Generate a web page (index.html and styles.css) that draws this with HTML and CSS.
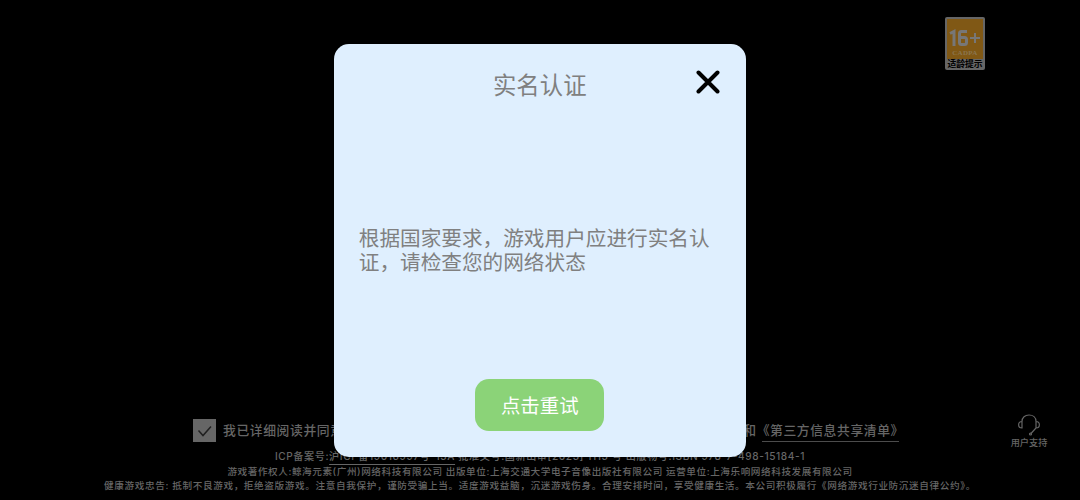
FILE: index.html
```html
<!DOCTYPE html>
<html lang="zh-CN">
<head>
<meta charset="utf-8">
<title>实名认证</title>
<link rel="stylesheet" href="styles.css">
</head>
<body>
<main class="screen">
  <header class="top">
    <div class="rating">
      <div class="rating-face">
        <svg class="rating-age" viewBox="0 0 32 18"><path d="M1 4.500L5 2.500V17M18 2.500H12.500Q10.500 2.500 10.500 4.500V13.500Q10.500 15.500 12.500 15.500H15.500Q17.500 15.500 17.500 13.500V10.500Q17.500 8.500 15.500 8.500H10.500"/><path class="plus" d="M21 9H31M26 4V14"/></svg>
        <span class="rating-org">CADPA</span>
      </div>
      <span class="rating-label">适龄提示</span>
    </div>
  </header>
  <footer class="bottom">
    <div class="row">
      <div class="agree">
        <span class="check"><svg viewBox="0 0 23 23"><path d="M5.500 11.500L10 16.500L18 7.500"/></svg></span>
        <span>我已详细阅读并同意</span>
        <span class="agree-end">和<a class="doc">《第三方信息共享清单》</a></span>
      </div>
      <div class="support">
        <svg viewBox="0 0 24 22"><path d="M5 8V7.500C5 3.500 8 1 12 1S19 3.500 19 7.500V14L14 19.500M5 7.500V14C.5 14 .5 7.500 5 7.500M19 7.500C23.500 7.500 23.500 14 19 14"/><circle cx="13.500" cy="20" r="1"/></svg>
        <span>用户支持</span>
      </div>
    </div>
    <p class="legal icp">ICP备案号:<u>沪ICP备19016997号-13A</u> 批准文号:国新出审[2023] 1113 号 出版物号:ISBN 978-7-498-15184-1</p>
    <p class="legal owner">游戏著作权人:鲸海元素(广州)网络科技有限公司 出版单位:上海交通大学电子音像出版社有限公司 运营单位:上海乐响网络科技发展有限公司</p>
    <p class="legal advice">健康游戏忠告: 抵制不良游戏，拒绝盗版游戏<i>。</i>注意自我保护，谨防受骗上当<i>。</i>适度游戏益脑，沉迷游戏伤身<i>。</i>合理安排时间，享受健康生活<i>。</i>本公司积极履行《网络游戏行业防沉迷自律公约》<i>。</i></p>
  </footer>
</main>
<section class="dialog">
  <div class="dialog-head">
    <h1>实名认证</h1>
    <svg class="close" viewBox="0 0 24 24"><path d="M2.500 2.500L21.500 21.500M21.500 2.500L2.500 21.500"/></svg>
  </div>
  <p class="message">根据国家要求，游戏用户应进行实名认证，请检查您的网络状态</p>
  <button class="retry">点击重试</button>
</section>
</body>
</html>
```
FILE: styles.css
```css
* { box-sizing: border-box; }
body {
  margin: 0;
  background: #000;
  font-family: Inter, "Noto Sans CJK SC", sans-serif;
}
.screen {
  display: flex;
  flex-direction: column;
  justify-content: space-between;
  height: 500px;
  overflow: hidden;
  color: #666;
}
.top { display: flex; justify-content: flex-end; padding: 17px 95px 0 0; }
.rating {
  display: flex;
  flex-direction: column;
  width: 40px;
  height: 53px;
  padding: 2px;
  border-radius: 2px;
  background: #666;
}
.rating-face {
  display: flex;
  flex-direction: column;
  align-items: center;
  flex: none;
  height: 40px;
  padding-top: 10px;
  background: #805815;
}
.rating-age { flex: none; width: 32px; height: 18px; fill: none; stroke: #777; stroke-width: 3; }
.rating-age .plus { stroke-width: 2; }
.rating-org { font: bold 7px/13px "Liberation Serif", serif; letter-spacing: .3px; color: #8a7650; }
.rating-label {
  font-size: 8.800px;
  line-height: 10px;
  font-weight: 700;
  text-align: center;
  white-space: nowrap;
  color: #000;
}
.bottom { height: 88px; }
.row { display: flex; justify-content: space-between; height: 37px; padding: 0 31px 0 193px; }
.agree {
  display: flex;
  width: 711px;
  height: 23px;
  margin-top: 7px;
  font-size: 12.800px;
  font-weight: 500;
  line-height: 23px;
  letter-spacing: .6px;
  white-space: nowrap;
}
.check { width: 23px; height: 23px; margin-right: 7px; background: #666; }
.check svg { display: block; fill: none; stroke: #202020; stroke-width: 1.500; }
.agree-end { margin-left: auto; }
.doc {
  background: linear-gradient(#4c4c4c, #4c4c4c) 5px 100% / calc(100% - 10px) 1px no-repeat;
  padding-bottom: 4px;
}
.support {
  display: flex;
  flex-direction: column;
  align-items: center;
  width: 40px;
  font-size: 9.200px;
  font-weight: 500;
  line-height: 13px;
  padding-top: 2px;
  white-space: nowrap;
}
.support svg { width: 24px; height: 22px; fill: none; stroke: #666; stroke-width: 1.200; }
.legal {
  margin: 0;
  font-size: 9.600px;
  font-weight: 500;
  line-height: 15px;
  text-align: center;
  white-space: nowrap;
  color: #666;
}
.legal i { font-family: "Noto Sans CJK TC", sans-serif; font-style: normal; }
.icp { font-size: 10.100px; letter-spacing: .6px; }
.icp u { text-underline-offset: 4px; }
.owner { letter-spacing: .58px; }
.advice { line-height: 13px; letter-spacing: .64px; }
.dialog {
  position: absolute;
  left: 333.500px;
  top: 43.500px;
  width: 412.500px;
  height: 413px;
  display: flex;
  flex-direction: column;
  align-items: center;
  border-radius: 15px;
  background: #dfeffe;
  color: #808080;
}
.dialog-head {
  display: grid;
  grid-template-columns: 1fr auto 1fr;
  align-items: center;
  width: 100%;
  padding: 25px 26.500px 0;
}
.dialog h1 { grid-column: 2; margin: 0; font-size: 23.400px; line-height: 34px; font-weight: 400; }
.close { justify-self: end; width: 24px; height: 24px; margin-top: -7px; fill: none; stroke: #000; stroke-width: 4; stroke-linecap: round; }
.message { width: 362px; margin: auto 0; padding-top: 21px; font-size: 20.650px; line-height: 24.500px; }
.retry {
  width: 129px;
  height: 52px;
  margin-bottom: 26px;
  padding: 0;
  border: 0;
  border-radius: 14px;
  background: #8bd378;
  color: #fff;
  font: inherit;
  font-size: 19.400px;
}
```
